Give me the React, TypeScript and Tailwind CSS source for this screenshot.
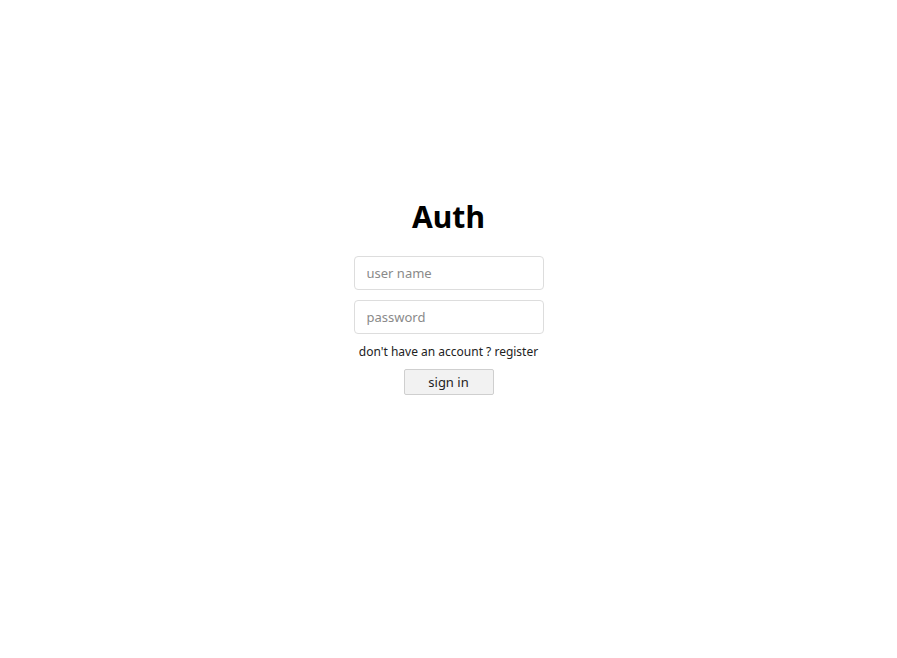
const App = () => {
  return (
    <main
      className="min-h-screen bg-white flex flex-col items-center pt-[197px]"
      style={{ fontFamily: '"Noto Sans", "Open Sans", sans-serif' }}
    >
      {/* Title */}
      <h1 className="text-[30px] leading-[39px] font-bold text-black">Auth</h1>

      {/* Form */}
      <form className="mt-[20px] flex flex-col items-center">
        <input
          type="text"
          placeholder="user name"
          className="w-[190px] h-[34px] px-3 text-[13px] text-gray-800 placeholder:text-[#8a8a8a] border border-[#dddddd] rounded-[4px] outline-none"
        />
        <input
          type="password"
          placeholder="password"
          className="mt-[10px] w-[190px] h-[34px] px-3 text-[13px] text-gray-800 placeholder:text-[#8a8a8a] border border-[#dddddd] rounded-[4px] outline-none"
        />
        <p className="mt-[9px] text-[12px] leading-[18px] text-[#222222]">
          don't have an account ? register
        </p>
        <button
          type="button"
          className="mt-[8px] w-[90px] h-[26px] text-[13px] leading-none text-[#222222] bg-[#f2f2f2] border border-[#cfcfcf] rounded-[2px]"
        >
          sign in
        </button>
      </form>
    </main>
  );
};

export default App;
